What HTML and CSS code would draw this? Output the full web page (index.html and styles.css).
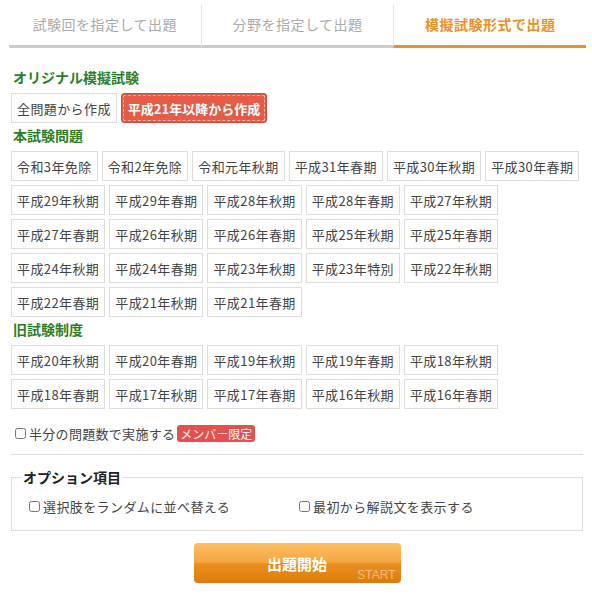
FILE: index.html
```html
<!DOCTYPE html>
<html lang="ja">
<head>
<meta charset="utf-8">
<link rel="stylesheet" href="styles.css">
</head>
<body>
<div class="tabs">
  <div class="tab">試験回を指定して出題</div>
  <div class="tab tab-sep">分野を指定して出題</div>
  <div class="tab tab-sep tab-active">模擬試験形式で出題</div>
</div>
<div class="content">
  <h3 class="heading h-first">オリジナル模擬試験</h3>
  <div class="btns">
    <span class="btn">全問題から作成</span>
    <span class="btn btn-red">平成21年以降から作成</span>
  </div>
  <h3 class="heading">本試験問題</h3>
  <div class="btns">
    <span class="btn">令和3年免除</span>
    <span class="btn">令和2年免除</span>
    <span class="btn">令和元年秋期</span>
    <span class="btn">平成31年春期</span>
    <span class="btn">平成30年秋期</span>
    <span class="btn">平成30年春期</span>
    <span class="btn">平成29年秋期</span>
    <span class="btn">平成29年春期</span>
    <span class="btn">平成28年秋期</span>
    <span class="btn">平成28年春期</span>
    <span class="btn">平成27年秋期</span>
    <span class="btn">平成27年春期</span>
    <span class="btn">平成26年秋期</span>
    <span class="btn">平成26年春期</span>
    <span class="btn">平成25年秋期</span>
    <span class="btn">平成25年春期</span>
    <span class="btn">平成24年秋期</span>
    <span class="btn">平成24年春期</span>
    <span class="btn">平成23年秋期</span>
    <span class="btn">平成23年特別</span>
    <span class="btn">平成22年秋期</span>
    <span class="btn">平成22年春期</span>
    <span class="btn">平成21年秋期</span>
    <span class="btn">平成21年春期</span>
  </div>
  <h3 class="heading">旧試験制度</h3>
  <div class="btns">
    <span class="btn">平成20年秋期</span>
    <span class="btn">平成20年春期</span>
    <span class="btn">平成19年秋期</span>
    <span class="btn">平成19年春期</span>
    <span class="btn">平成18年秋期</span>
    <span class="btn">平成18年春期</span>
    <span class="btn">平成17年秋期</span>
    <span class="btn">平成17年春期</span>
    <span class="btn">平成16年秋期</span>
    <span class="btn">平成16年春期</span>
  </div>
  <label class="half"><input type="checkbox" class="cb">半分の問題数で実施する<span class="badge">メンバー限定</span></label>
  <hr class="rule">
  <fieldset class="options">
    <legend class="legend">オプション項目</legend>
    <label class="opt"><input type="checkbox" class="cb">選択肢をランダムに並べ替える</label>
    <label class="opt"><input type="checkbox" class="cb">最初から解説文を表示する</label>
  </fieldset>
  <div class="start-wrap">
    <div class="start">出題開始<span class="start-sub">START</span></div>
  </div>
</div>
</body>
</html>
```
FILE: styles.css
```css
* { box-sizing: border-box; }
body {
  margin: 0;
  font-family: "Noto Sans CJK JP", "Noto Sans", sans-serif;
  color: #333;
  background: #fff;
}
.tabs {
  display: flex;
  margin: 5px 6px 0 9px;
}
.tab {
  flex: 1;
  height: 43px;
  border-bottom: 3px solid #cccccc;
  display: flex;
  align-items: center;
  justify-content: center;
  font-size: 14px;
  color: #aaaaaa;
  letter-spacing: 0.5px;
  padding-bottom: 2px;
}
.tab-sep { border-left: 1px solid #e6e6e6; }
.tab-active {
  color: #ef9022;
  font-weight: bold;
  border-bottom-color: #ef9022;
}
.content { padding: 0 9px 0 11px; }
.heading {
  margin: 2px 0 6px 2px;
  font-size: 14px;
  line-height: 20px;
  color: #2b7f26;
  font-weight: bold;
  letter-spacing: 0;
}
.h-first { margin-top: 19px; }
.btns {
  display: flex;
  flex-wrap: wrap;
  gap: 4px;
}
.btn {
  height: 30px;
  display: inline-flex;
  align-items: center;
  padding: 0 5px;
  border: 1px solid #dddddd;
  font-size: 13px;
  letter-spacing: 0.4px;
  color: #444;
  background: #fff;
}
.btn-red {
  background: #e65b45;
  color: #fff;
  font-weight: bold;
  border: 1px solid #d44a36;
  border-radius: 3px;
  outline: 1px dashed rgba(255,255,255,0.55);
  outline-offset: -3px;
  padding: 0 6px;
  letter-spacing: 0;
}
.half {
  display: flex;
  align-items: center;
  margin: 14px 0 0 2px;
  font-size: 13px;
  letter-spacing: 0.3px;
  color: #444;
  height: 20px;
}
.cb {
  width: 11px;
  height: 11px;
  margin: 0 3px 0 2px;
}
.badge {
  display: inline-block;
  margin-left: 2px;
  background: #e5504f;
  color: #fff;
  font-size: 12px;
  line-height: 17px;
  padding: 0 3px;
  border-radius: 3px;
  letter-spacing: 0;
}
.rule {
  border: 0;
  border-top: 1px solid #dddddd;
  margin: 11px 0 0 0;
}
.options {
  margin: 12px 0 0 0;
  padding: 9px 15px 14px 15px;
  border: 1px solid #dddddd;
  display: flex;
  min-width: 0;
}
.legend {
  font-size: 14px;
  font-weight: bold;
  line-height: 20px;
  color: #222;
  padding: 0 2px;
  margin-left: -6px;
}
.opt {
  display: flex;
  align-items: center;
  width: 276px;
  height: 20px;
  font-size: 13px;
  letter-spacing: 0.4px;
  color: #444;
}
.start-wrap {
  display: flex;
  justify-content: center;
  margin-top: 12px;
}
.start {
  position: relative;
  width: 207px;
  height: 40px;
  border-radius: 4px;
  background: linear-gradient(to bottom, #fcc064 0%, #f5a53f 48%, #ea9021 52%, #dc7c08 100%);
  color: #fff;
  font-weight: bold;
  font-size: 15px;
  display: flex;
  align-items: center;
  justify-content: center;
}
.start-sub {
  position: absolute;
  right: 5px;
  bottom: 1px;
  font-family: "Liberation Sans", Arial, sans-serif;
  font-weight: normal;
  font-size: 12px;
  color: rgba(255,255,255,0.45);
}
```
